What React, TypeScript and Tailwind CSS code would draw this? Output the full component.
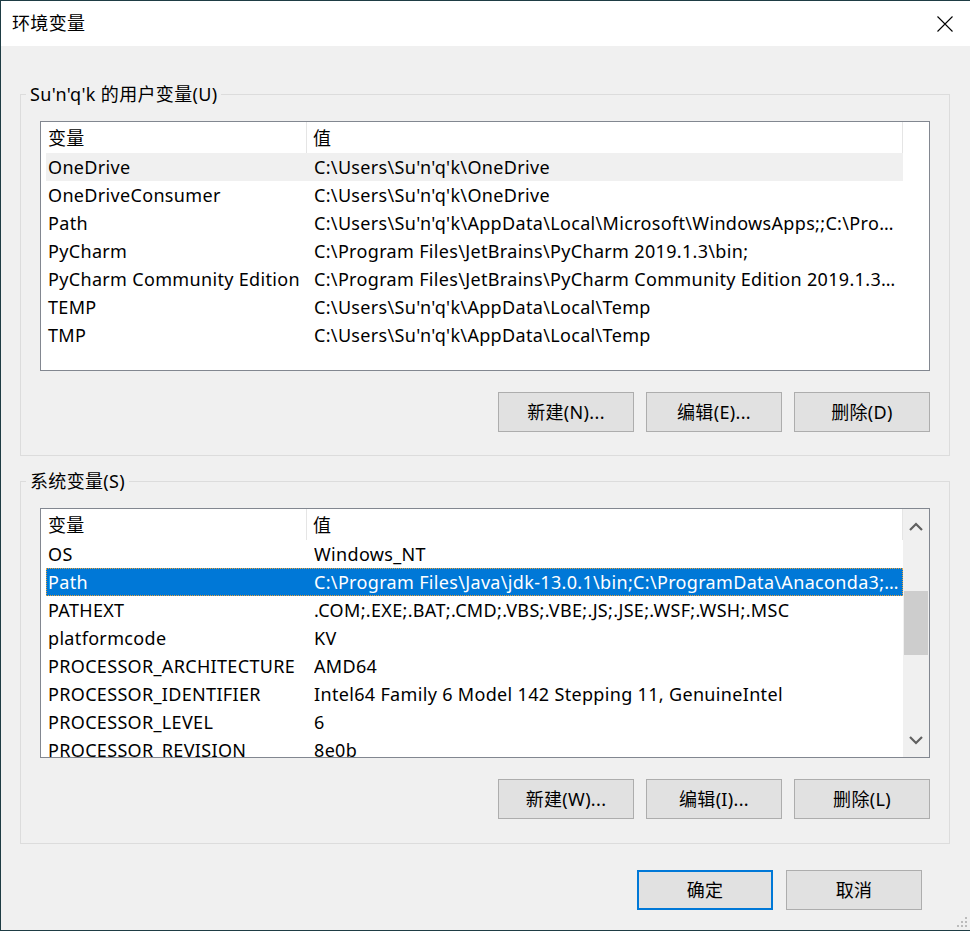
import React from "react";

type Row = { name: string; value: string };

const userVars: Row[] = [
  { name: "OneDrive", value: "C:\\Users\\Su'n'q'k\\OneDrive" },
  { name: "OneDriveConsumer", value: "C:\\Users\\Su'n'q'k\\OneDrive" },
  { name: "Path", value: "C:\\Users\\Su'n'q'k\\AppData\\Local\\Microsoft\\WindowsApps;;C:\\Program Files\\JetBrains" },
  { name: "PyCharm", value: "C:\\Program Files\\JetBrains\\PyCharm 2019.1.3\\bin;" },
  { name: "PyCharm Community Edition", value: "C:\\Program Files\\JetBrains\\PyCharm Community Edition 2019.1.3\\bin;" },
  { name: "TEMP", value: "C:\\Users\\Su'n'q'k\\AppData\\Local\\Temp" },
  { name: "TMP", value: "C:\\Users\\Su'n'q'k\\AppData\\Local\\Temp" },
];

const sysVars: Row[] = [
  { name: "OS", value: "Windows_NT" },
  { name: "Path", value: "C:\\Program Files\\Java\\jdk-13.0.1\\bin;C:\\ProgramData\\Anaconda3;C:\\ProgramData" },
  { name: "PATHEXT", value: ".COM;.EXE;.BAT;.CMD;.VBS;.VBE;.JS;.JSE;.WSF;.WSH;.MSC" },
  { name: "platformcode", value: "KV" },
  { name: "PROCESSOR_ARCHITECTURE", value: "AMD64" },
  { name: "PROCESSOR_IDENTIFIER", value: "Intel64 Family 6 Model 142 Stepping 11, GenuineIntel" },
  { name: "PROCESSOR_LEVEL", value: "6" },
  { name: "PROCESSOR_REVISION", value: "8e0b" },
];

function Button({ label, primary }: { label: string; primary?: boolean }) {
  return (
    <button
      className={`w-[136px] h-[40px] bg-[#e1e1e1] text-[#000] text-[18px] flex items-center justify-center ${
        primary ? "border-2 border-[#0078d7]" : "border border-[#adadad]"
      }`}
    >
      {label}
    </button>
  );
}

function VarList({ rows, selected, hover, scroll }: { rows: Row[]; selected?: number; hover?: number; scroll?: boolean }) {
  return (
    <div className="h-[250px] border border-[#828790] bg-white flex overflow-hidden">
      <div className="flex-1 pl-[5px] overflow-hidden">
        <div className="flex h-[31px] w-[857px]">
          <div className="w-[261px] border-r border-[#e5e5e5] pl-[2px] pt-[2px] flex items-center">变量</div>
          <div className="flex-1 border-r border-[#e5e5e5] pl-[6px] pt-[2px] flex items-center">值</div>
        </div>
        {rows.map((r, i) => (
          <div
            key={r.name}
            className={`grid grid-cols-[268px_1fr] h-[28px] w-[857px] items-center ${
              i === selected
                ? "bg-[#0078d7] text-white outline outline-1 outline-dotted outline-[#e9a23b] -outline-offset-1"
                : i === hover
                ? "bg-[#f0f0f0]"
                : ""
            }`}
          >
            <span className="pl-[2px] whitespace-nowrap overflow-hidden">{r.name}</span>
            <span className="truncate pr-[4px]">{r.value}</span>
          </div>
        ))}
      </div>
      {scroll && (
        <div className="w-[26px] bg-[#f0f0f0] flex flex-col">
          <div className="h-[34px] flex items-center justify-center">
            <svg width="14" height="9" viewBox="0 0 14 9">
              <path d="M1 8 L7 2 L13 8" fill="none" stroke="#606060" strokeWidth="2.2" />
            </svg>
          </div>
          <div className="h-[48px]" />
          <div className="h-[64px] mx-[1px] bg-[#cdcdcd]" />
          <div className="flex-1" />
          <div className="h-[30px] flex items-center justify-center pb-[4px]">
            <svg width="14" height="9" viewBox="0 0 14 9">
              <path d="M1 1 L7 7 L13 1" fill="none" stroke="#606060" strokeWidth="2.2" />
            </svg>
          </div>
        </div>
      )}
    </div>
  );
}

function Group({ title, children, bottom }: { title: string; children: React.ReactNode; bottom: string }) {
  return (
    <div className={`relative border border-[#dcdcdc] px-[19px] pt-[26px] ${bottom}`}>
      <span className="absolute left-[5px] top-[-14px] bg-[#f0f0f0] px-[4px] leading-[26px]">{title}</span>
      {children}
    </div>
  );
}

export default function App() {
  return (
    <div
      className="w-[970px] h-[931px] bg-[#f0f0f0] border-l border-b border-t border-[#1e3c44] flex flex-col text-[18px] tracking-[0.33px] text-black overflow-hidden relative"
      style={{ fontFamily: '"Noto Sans", "Noto Sans CJK SC", sans-serif' }}
    >
      <div className="h-[45px] bg-white flex items-center justify-between pl-[11px] pr-[17px] shrink-0">
        <span className="text-[18px]">环境变量</span>
        <svg width="16" height="16" viewBox="0 0 16 16">
          <path d="M0.5 0.5 L15.5 15.5 M15.5 0.5 L0.5 15.5" stroke="#000" strokeWidth="1.1" />
        </svg>
      </div>

      <div className="pl-[19px] pr-[20px] pt-[48px]">
        <Group title="Su'n'q'k 的用户变量(U)" bottom="pb-[23px]">
          <VarList rows={userVars} hover={0} />
          <div className="flex justify-end gap-[12px] mt-[21px]">
            <Button label="新建(N)..." />
            <Button label="编辑(E)..." />
            <Button label="删除(D)" />
          </div>
        </Group>

        <div className="h-[25px]" />

        <Group title="系统变量(S)" bottom="pb-[24px]">
          <VarList rows={sysVars} selected={1} scroll />
          <div className="flex justify-end gap-[12px] mt-[21px]">
            <Button label="新建(W)..." />
            <Button label="编辑(I)..." />
            <Button label="删除(L)" />
          </div>
        </Group>

        <div className="flex justify-end gap-[13px] mt-[26px] pr-[28px]">
          <Button label="确定" primary />
          <Button label="取消" />
        </div>
      </div>

      <svg className="absolute right-[2px] bottom-[2px]" width="12" height="12" viewBox="0 0 12 12">
        <rect x="9" y="1" width="2" height="2" fill="#bcbcbc" />
        <rect x="5" y="5" width="2" height="2" fill="#bcbcbc" />
        <rect x="9" y="5" width="2" height="2" fill="#bcbcbc" />
        <rect x="1" y="9" width="2" height="2" fill="#bcbcbc" />
        <rect x="5" y="9" width="2" height="2" fill="#bcbcbc" />
        <rect x="9" y="9" width="2" height="2" fill="#bcbcbc" />
      </svg>
    </div>
  );
}
